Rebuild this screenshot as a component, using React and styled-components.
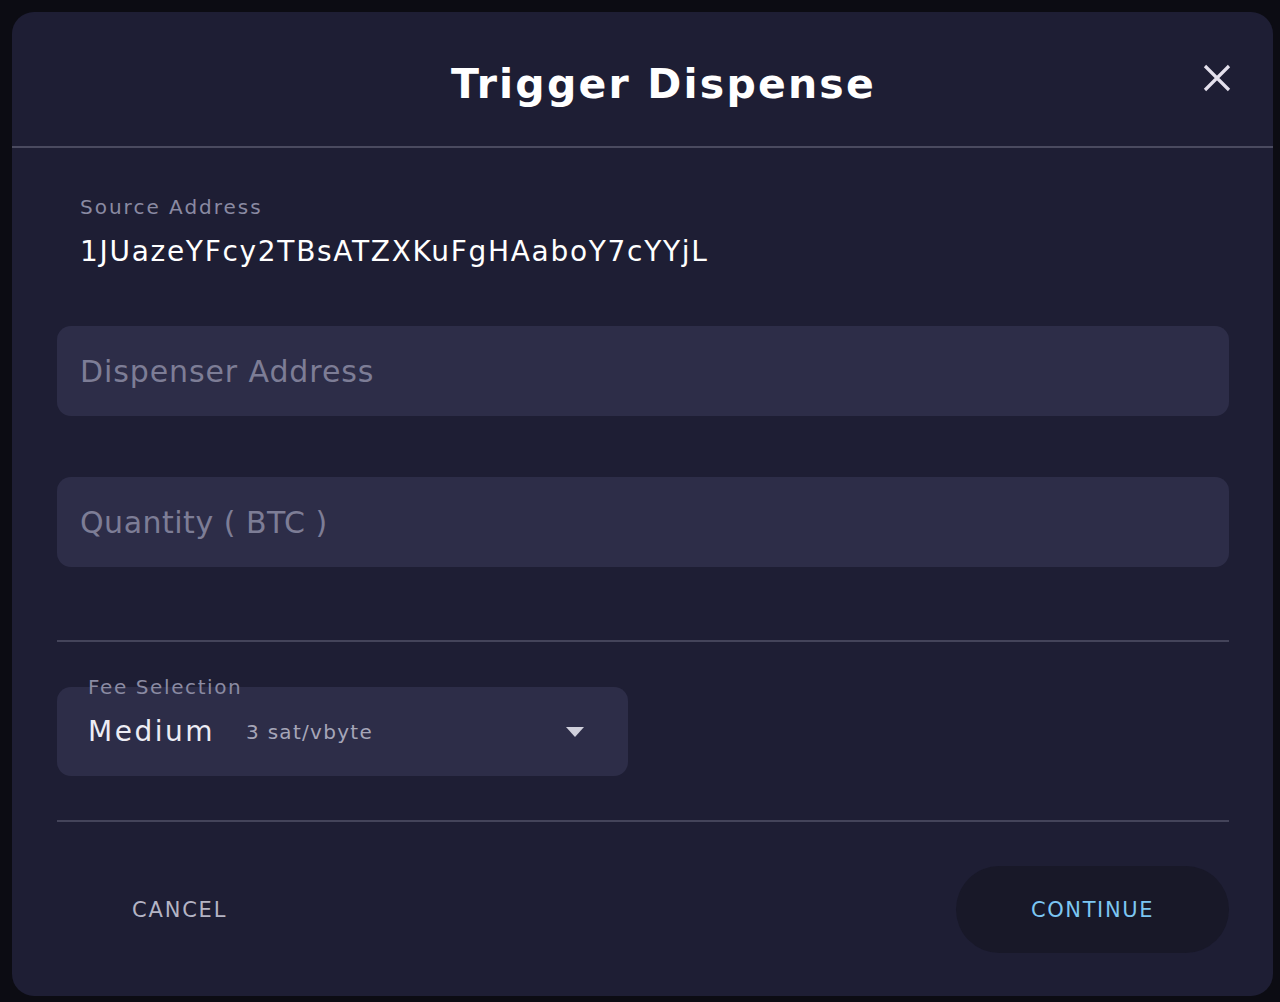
import React from 'react';
import styled, { createGlobalStyle } from 'styled-components';

const GlobalStyle = createGlobalStyle`
  html, body {
    margin: 0;
    padding: 0;
    background: #0c0c13;
    font-family: "DejaVu Sans", "Noto Sans", sans-serif;
  }
  * { box-sizing: border-box; }
`;

const Backdrop = styled.div`
  width: 1280px;
  height: 1002px;
  padding: 12px 7px 6px 12px;
  background: #0c0c13;
  overflow: hidden;
`;

const Modal = styled.div`
  width: 100%;
  height: 100%;
  background: #1e1e34;
  border-radius: 22px;
  display: flex;
  flex-direction: column;
`;

const Header = styled.div`
  position: relative;
  height: 136px;
  padding: 10px 0 0 42px;
  border-bottom: 2px solid #4a4a5f;
  display: flex;
  align-items: center;
  justify-content: center;
`;

const Title = styled.h2`
  margin: 0;
  color: #ffffff;
  font-size: 41px;
  font-weight: 700;
  letter-spacing: 2.2px;
`;

const CloseButton = styled.button`
  position: absolute;
  right: 40px;
  top: 50px;
  width: 32px;
  height: 32px;
  padding: 0;
  border: none;
  background: none;
  cursor: pointer;
  display: flex;
  align-items: center;
  justify-content: center;
`;

const Body = styled.div`
  padding: 47px 44px 0 45px;
  display: flex;
  flex-direction: column;
`;

const SourceBlock = styled.div`
  padding-left: 23px;
  display: flex;
  flex-direction: column;
  gap: 16px;
`;

const SourceLabel = styled.div`
  color: #8a8aa2;
  font-size: 20px;
  letter-spacing: 2px;
`;

const SourceValue = styled.div`
  color: #ffffff;
  font-size: 28px;
  letter-spacing: 1.7px;
`;

const Field = styled.input`
  width: 100%;
  height: 90px;
  border: none;
  border-radius: 14px;
  background: #2d2d48;
  padding: 0 23px;
  color: #ffffff;
  font-family: inherit;
  font-size: 30px;
  letter-spacing: ${({ $spacing }) => $spacing}px;
  margin-top: ${({ $top }) => $top}px;
  outline: none;

  &::placeholder {
    color: #7d7d96;
  }
`;

const Divider = styled.div`
  height: 2px;
  background: #44445a;
  margin-top: ${({ $top }) => $top}px;
`;

const Select = styled.div`
  position: relative;
  width: 571px;
  height: 89px;
  margin-top: 45px;
  border-radius: 14px;
  background: #2d2d48;
  display: flex;
  align-items: center;
  padding: 0 44px 0 31px;
`;

const SelectLabel = styled.span`
  position: absolute;
  left: 31px;
  top: -12px;
  color: #8a8aa2;
  font-size: 20px;
  letter-spacing: 1.6px;
`;

const SelectValue = styled.span`
  color: #ececf4;
  font-size: 28px;
  font-weight: 500;
  letter-spacing: 2.5px;
`;

const SelectRate = styled.span`
  margin-left: 31px;
  color: #a6a6b8;
  font-size: 20px;
  letter-spacing: 1.3px;
  flex: 1;
`;

const Caret = styled.span`
  width: 0;
  height: 0;
  border-left: 9px solid transparent;
  border-right: 9px solid transparent;
  border-top: 10px solid #d0d0dc;
`;

const Footer = styled.div`
  display: flex;
  align-items: center;
  justify-content: space-between;
  margin-top: 44px;
  padding-left: 75px;
`;

const TextButton = styled.button`
  border: none;
  background: none;
  padding: 0;
  color: #b4b4c4;
  font-family: inherit;
  font-size: 21px;
  letter-spacing: 1.8px;
  cursor: pointer;
`;

const PillButton = styled.button`
  width: 273px;
  height: 87px;
  border: none;
  border-radius: 44px;
  background: #181828;
  color: #7cc6f2;
  font-family: inherit;
  font-size: 21px;
  letter-spacing: 1.6px;
  cursor: pointer;
`;

export default function App() {
  return (
    <>
      <GlobalStyle />
      <Backdrop>
        <Modal>
          <Header>
            <Title>Trigger Dispense</Title>
            <CloseButton aria-label="Close">
              <svg width="28" height="28" viewBox="0 0 28 28">
                <path d="M2 2 L26 26 M26 2 L2 26" stroke="#e4e0ec" strokeWidth="3.2" strokeLinecap="butt" />
              </svg>
            </CloseButton>
          </Header>
          <Body>
            <SourceBlock>
              <SourceLabel>Source Address</SourceLabel>
              <SourceValue>1JUazeYFcy2TBsATZXKuFgHAaboY7cYYjL</SourceValue>
            </SourceBlock>
            <Field $top={58} $spacing={0.9} placeholder="Dispenser Address" />
            <Field $top={61} $spacing={0.5} placeholder="Quantity ( BTC )" />
            <Divider $top={73} />
            <Select>
              <SelectLabel>Fee Selection</SelectLabel>
              <SelectValue>Medium</SelectValue>
              <SelectRate>3 sat/vbyte</SelectRate>
              <Caret />
            </Select>
            <Divider $top={44} />
            <Footer>
              <TextButton>CANCEL</TextButton>
              <PillButton>CONTINUE</PillButton>
            </Footer>
          </Body>
        </Modal>
      </Backdrop>
    </>
  );
}
